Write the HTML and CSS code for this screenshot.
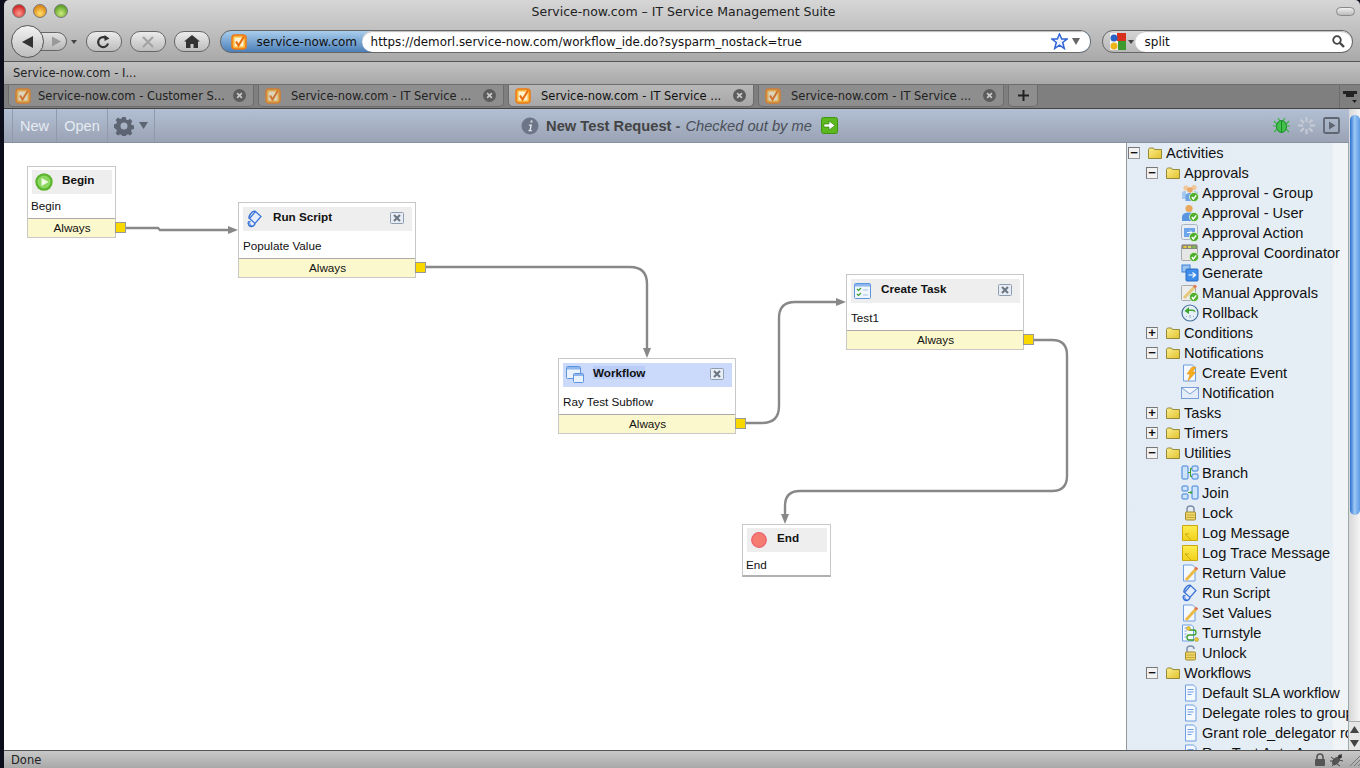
FILE: index.html
```html
<!DOCTYPE html>
<html lang="en">
<head>
    <meta charset="UTF-8">
    <title>Service-now.com - IT Service Management Suite</title>
    <link rel="stylesheet" href="styles.css">
</head>
<body>
<svg class="sprites" xmlns="http://www.w3.org/2000/svg">
    <defs>
        <linearGradient id="g-folder" x1="0" y1="0" x2="1" y2="1"><stop offset="0" stop-color="#fbee8c"/><stop offset="1" stop-color="#e2c22e"/></linearGradient>
        <linearGradient id="g-note" x1="0" y1="0" x2="0" y2="1"><stop offset="0" stop-color="#fdec50"/><stop offset="1" stop-color="#f2d21a"/></linearGradient>
    </defs>
    <symbol id="fav" viewBox="0 0 16 16">
        <rect x="1" y="1" width="14" height="14" rx="3" fill="#f9b53a" stroke="#ee7a12" stroke-width="1.5"/>
        <rect x="3.5" y="3.5" width="9" height="9" fill="#fff3cf"/>
        <path d="M5 7.5l2.5 4L13 2.5" fill="none" stroke="#e86a0a" stroke-width="2"/>
    </symbol>
    <symbol id="folder" viewBox="0 0 14 12">
        <path d="M.5 11.5V2.5l1-1.5h4l1 1.5h7v9z" fill="url(#g-folder)" stroke="#94883a"/>
    </symbol>
    <symbol id="ok" viewBox="0 0 10 10">
        <circle cx="5" cy="5" r="4.6" fill="#4fae2c" stroke="#e8f6dc" stroke-width=".8"/>
        <path d="M2.8 5l1.6 2 2.8-3.6" fill="none" stroke="#fff" stroke-width="1.4"/>
    </symbol>
    <symbol id="group" viewBox="0 0 18 18">
        <circle cx="5" cy="4" r="2.6" fill="#efc79a"/><circle cx="13" cy="3.6" r="2.6" fill="#efc79a"/><circle cx="9" cy="6" r="2.8" fill="#e8a868"/>
        <path d="M1 15V9q0-2 4-2v8zM13 7q4 0 4 2v4h-4z" fill="#a6c8ee"/><path d="M4.500 17v-5q0-3 4.500-3t4 3v5z" fill="#6ea2e2"/>
        <use href="#ok" x="8" y="8" width="10" height="10"/>
    </symbol>
    <symbol id="user" viewBox="0 0 18 18">
        <circle cx="8" cy="4.500" r="3.600" fill="#e9a85c"/>
        <path d="M1 17v-4q0-4.500 7-4.500t7 4.500v4z" fill="#5a96e0"/>
        <use href="#ok" x="8" y="8" width="10" height="10"/>
    </symbol>
    <symbol id="action" viewBox="0 0 18 18">
        <rect x=".5" y=".5" width="16" height="15" rx="2" fill="#e8edf4" stroke="#aab4c4"/>
        <rect x="3" y="4" width="11" height="9" fill="#6ea4ea"/>
        <path d="M6 8.500h5M9 6.500l2 2-2 2" stroke="#fff" fill="none"/>
        <use href="#ok" x="8" y="8" width="10" height="10"/>
    </symbol>
    <symbol id="coord" viewBox="0 0 18 18">
        <rect x=".5" y=".5" width="16" height="16" rx="1.500" fill="#e6e6e6" stroke="#aaa"/>
        <rect x="1" y="1" width="15" height="4" fill="#8a8a7c"/>
        <rect x="2.500" y="2" width="3" height="2" fill="#e8c83a"/><rect x="7" y="2" width="3" height="2" fill="#d8d860"/><rect x="11.500" y="2" width="3" height="2" fill="#7cc04a"/>
        <use href="#ok" x="8" y="8" width="10" height="10"/>
    </symbol>
    <symbol id="generate" viewBox="0 0 18 18">
        <rect x="1" y="1" width="8" height="7" fill="#9cc4f2" stroke="#3a80d8"/>
        <rect x="5" y="5" width="12" height="12" rx="1" fill="#3f8de8" stroke="#2a6cc4"/>
        <path d="M7.500 11h7M11.500 8.500l3 2.500-3 2.500" stroke="#fff" fill="none" stroke-width="1.200"/>
    </symbol>
    <symbol id="manual" viewBox="0 0 18 18">
        <rect x=".5" y="1.500" width="14" height="15" rx="1" fill="#ececec" stroke="#aaa"/>
        <path d="M3 14L14 2.500" stroke="#e6c878" stroke-width="3"/><path d="M13 3.500l2-2" stroke="#e07a5a" stroke-width="3"/>
        <use href="#ok" x="8" y="8" width="10" height="10"/>
    </symbol>
    <symbol id="rollback" viewBox="0 0 18 18">
        <circle cx="9" cy="9" r="8" fill="#e6eef8" stroke="#48709e" stroke-width="1.200"/>
        <path d="M3.500 7L8 3v2.500h3.500q3 0 3 3-1-1.500-3-1.500H8v3z" fill="#3ca52c"/>
        <path d="M9 11v3M5 12l1 1M13 12l-1 1" stroke="#8fa8c4"/>
    </symbol>
    <symbol id="event" viewBox="0 0 18 18">
        <path d="M2.500 1h9l3 3v13h-12z" fill="#f4f8ff" stroke="#6f9fe0"/>
        <path d="M11 3L6 10h3l-2 7 8-9h-3.500L15 3z" fill="#f6ae1c" stroke="#d88a10" stroke-width=".5"/>
    </symbol>
    <symbol id="mail" viewBox="0 0 18 18">
        <rect x=".5" y="3.500" width="17" height="11" fill="#e4ecf8" stroke="#7a9fd8"/>
        <path d="M1 4l8 6 8-6" fill="#f4f7fc" stroke="#7a9fd8"/>
    </symbol>
    <symbol id="branch" viewBox="0 0 18 18">
        <rect x="1" y="2" width="6" height="13" rx="1" fill="#cfe4fa" stroke="#3a80d8"/>
        <rect x="11" y="2" width="6" height="5" rx="1" fill="#cfe4fa" stroke="#3a80d8"/>
        <rect x="11" y="10" width="6" height="5" rx="1" fill="#cfe4fa" stroke="#3a80d8"/>
        <path d="M7 8.500h2.500M9.500 4.500v8M9.500 4.500H11M9.500 12.500H11" stroke="#3aa02c" fill="none"/>
    </symbol>
    <symbol id="join" viewBox="0 0 18 18">
        <rect x="1" y="2" width="6" height="5" rx="1" fill="#cfe4fa" stroke="#3a80d8"/>
        <rect x="1" y="10" width="6" height="5" rx="1" fill="#cfe4fa" stroke="#3a80d8"/>
        <rect x="11" y="2" width="6" height="13" rx="1" fill="#cfe4fa" stroke="#3a80d8"/>
        <path d="M7 8.500h4M9.500 7l1.500 1.500L9.500 10" stroke="#3aa02c" fill="none"/>
    </symbol>
    <symbol id="lock" viewBox="0 0 18 18">
        <path d="M6 8V5q0-3 3.500-3T13 5v3" fill="none" stroke="#7c8ea8" stroke-width="1.500"/>
        <rect x="4.500" y="8" width="10" height="8" rx="1" fill="#f0d668" stroke="#a08c30"/>
        <path d="M5.500 11h8M5.500 13.500h8" stroke="#c4a83c"/>
    </symbol>
    <symbol id="unlock" viewBox="0 0 18 18">
        <path d="M6 8V5q0-3 3.500-3T13 5" fill="none" stroke="#7c8ea8" stroke-width="1.500"/>
        <rect x="4.500" y="8" width="10" height="8" rx="1" fill="#f0d668" stroke="#a08c30"/>
        <path d="M5.500 11h8M5.500 13.500h8" stroke="#c4a83c"/>
    </symbol>
    <symbol id="note" viewBox="0 0 18 18">
        <path d="M1.500 1.500h15v15h-15z" fill="url(#g-note)" stroke="#c8a810"/>
        <path d="M4 10l6 6M4 10h4" stroke="#b89810" fill="none" stroke-width=".7"/>
    </symbol>
    <symbol id="pencil" viewBox="0 0 18 18">
        <path d="M2.500 1h9l2.500 2.500V17h-11.500z" fill="#f4f8ff" stroke="#6f9fe0"/>
        <path d="M5 16L15 5" stroke="#eabb4a" stroke-width="3"/><path d="M14.500 5.500L16 3.500" stroke="#e0705a" stroke-width="3"/>
    </symbol>
    <symbol id="script" viewBox="0 0 18 18">
        <path d="M9.500 1.500l5.500 5-6 7-5.500-5z" fill="#e4eefc" stroke="#3670d8" stroke-width="1.200"/>
        <path d="M9.500 1.500Q7 .5 4.500 4T3.500 8.500M9 13.500q-1 3-3.500 3T2.500 14t2-2.500" fill="none" stroke="#3670d8" stroke-width="1.400"/>
        <path d="M3 11q-1.500 1.500-.5 3.500T6 16" fill="#7fa8ec" stroke="#3670d8"/>
    </symbol>
    <symbol id="turn" viewBox="0 0 18 18">
        <path d="M1.500 1h9l2 2v14h-11z" fill="#f4f8ff" stroke="#6f9fe0"/>
        <path d="M3.500 4h3M3.500 7h2M3.500 10h2M3.500 13h2" stroke="#7a9fd8"/>
        <path d="M8 6h5q2 0 2 2.500T13 11H8q-2 0-2 2.500T8 16h5" fill="none" stroke="#3aa02c" stroke-width="1.300"/>
        <circle cx="7.500" cy="4.500" r="2" fill="#e8c83a" stroke="#a08c30" stroke-width=".5"/><circle cx="15.500" cy="15.500" r="2" fill="#e8c83a" stroke="#a08c30" stroke-width=".5"/>
    </symbol>
    <symbol id="doc" viewBox="0 0 18 18">
        <path d="M4.500 1h8l2.500 2.500V17H4.500z" fill="#f4f8ff" stroke="#6f9fe0"/>
        <path d="M6.500 5.500h6M6.500 8h6M6.500 10.500h4" stroke="#6f9fe0"/>
    </symbol>
    <symbol id="task" viewBox="0 0 18 18">
        <rect x=".5" y="1.500" width="16" height="15" rx="1" fill="#f0f6fe" stroke="#5c94de"/>
        <rect x="1" y="2" width="15" height="2.500" fill="#8cb6ec"/>
        <path d="M3 7l1.500 1.500L7 6M3 12l1.500 1.500L7 11" stroke="#3aa02c" fill="none" stroke-width="1.200"/>
        <path d="M9 8h5M9 13h5" stroke="#a8c4e8"/>
    </symbol>
    <symbol id="flow" viewBox="0 0 18 18">
        <rect x=".5" y=".5" width="14" height="12" rx="1" fill="#eaf2fd" stroke="#5c94de"/>
        <rect x="1" y="1" width="13" height="2.500" fill="#8cb6ec"/>
        <rect x="7.500" y="7.500" width="10" height="9" rx="1" fill="#eaf2fd" stroke="#5c94de"/>
        <rect x="8" y="8" width="9" height="2" fill="#8cb6ec"/>
    </symbol>
    <symbol id="x-box" viewBox="0 0 14 12">
        <rect x=".5" y=".5" width="13" height="11" rx="1" fill="#e8ecf4" stroke="#8f9db0"/>
        <path d="M4 3l6 6M10 3l-6 6" stroke="#6a7482" stroke-width="2"/>
    </symbol>
    <symbol id="tab-x" viewBox="0 0 12 12">
        <circle cx="6" cy="6" r="6" fill="#5c5c5c"/>
        <path d="M3.800 3.800l4.400 4.400M8.200 3.800l-4.400 4.400" stroke="#c8c8c8" stroke-width="1.600"/>
    </symbol>
</svg>

<div class="screen">
    <div class="edge"></div>
    <div class="window">
        <div class="titlebar">
            <div class="lights">
                <span class="light light-red"></span>
                <span class="light light-amber"></span>
                <span class="light light-green"></span>
            </div>
            <div class="window-title">Service-now.com – IT Service Management Suite</div>
            <span class="toolbar-pill"></span>
        </div>

        <div class="navbar">
            <div class="back-forward">
                <div class="back-btn">
                    <svg width="14" height="14" viewBox="0 0 14 14"><path d="M1 7l11-6v12z" fill="#333"/></svg>
                </div>
                <div class="forward-btn">
                    <svg width="10" height="11" viewBox="0 0 10 11"><path d="M10 5.500L1 .5v10z" fill="#9a9a9a"/></svg>
                </div>
                <span class="mini-arrow"></span>
            </div>
            <div class="nav-btn">
                <svg width="16" height="14" viewBox="0 0 16 14"><path d="M12 8.500A5 5 0 1 1 10 3" fill="none" stroke="#333" stroke-width="2.200"/><path d="M8.500 0l5 3.500-5 2.500z" fill="#333"/></svg>
            </div>
            <div class="nav-btn">
                <svg width="12" height="12" viewBox="0 0 12 12"><path d="M1 1l10 10M11 1L1 11" stroke="#a4a4a4" stroke-width="2.200"/></svg>
            </div>
            <div class="nav-btn">
                <svg width="16" height="13" viewBox="0 0 16 13"><path d="M8 0l8 6.500h-2V13H9.500V9h-3v4H2V6.500H0z" fill="#333"/></svg>
            </div>
            <div class="urlbar">
                <div class="identity">
                    <svg class="fav"><use href="#fav"/></svg>
                    <span>service-now.com</span>
                </div>
                <div class="url-input">
                    <span class="url-text">https://demorl.service-now.com/workflow_ide.do?sysparm_nostack=true</span>
                    <svg width="17" height="17" viewBox="0 0 17 17"><path d="M8.500 1l2.200 5h5.300l-4.300 3.500 1.600 6-4.800-3.300-4.800 3.300 1.600-6L1 6h5.300z" fill="#eef4fe" stroke="#2f63d8" stroke-width="1.500"/></svg>
                    <span class="url-arrow"></span>
                </div>
            </div>
            <div class="searchbar">
                <div class="engine">
                    <svg width="16" height="17" viewBox="0 0 16 17">
                        <rect width="16" height="17" rx="1" fill="#f4f4f4"/>
                        <rect x="7" y="0" width="9" height="8" fill="#d8301f"/>
                        <circle cx="4" cy="5" r="3.500" fill="#2a62c8"/>
                        <rect x="8" y="8" width="8" height="9" fill="#3f9a2e"/>
                        <circle cx="4" cy="13" r="3.500" fill="#efb417"/>
                    </svg>
                    <span class="mini-arrow"></span>
                </div>
                <div class="search-input">
                    <span class="search-text">split</span>
                    <svg width="13" height="13" viewBox="0 0 13 13"><circle cx="5" cy="5" r="3.800" fill="none" stroke="#444" stroke-width="1.800"/><path d="M8 8l4 4" stroke="#444" stroke-width="2.400"/></svg>
                </div>
            </div>
        </div>

        <div class="bookmarks">Service-now.com - I...</div>

        <div class="tabstrip">
            <div class="tab">
                <svg class="fav faded"><use href="#fav"/></svg>
                <span class="tab-label">Service-now.com - Customer S...</span>
                <svg class="tab-close"><use href="#tab-x"/></svg>
            </div>
            <div class="tab">
                <svg class="fav faded"><use href="#fav"/></svg>
                <span class="tab-label tab-label-pad">Service-now.com - IT Service ...</span>
                <svg class="tab-close"><use href="#tab-x"/></svg>
            </div>
            <div class="tab tab-active">
                <svg class="fav"><use href="#fav"/></svg>
                <span class="tab-label tab-label-pad">Service-now.com - IT Service ...</span>
                <svg class="tab-close"><use href="#tab-x"/></svg>
            </div>
            <div class="tab">
                <svg class="fav faded"><use href="#fav"/></svg>
                <span class="tab-label tab-label-pad">Service-now.com - IT Service ...</span>
                <svg class="tab-close"><use href="#tab-x"/></svg>
            </div>
            <div class="tab-new">
                <svg width="11" height="11" viewBox="0 0 11 11"><path d="M5.500 0v11M0 5.500h11" stroke="#222" stroke-width="2"/></svg>
            </div>
            <div class="tab-list">
                <svg width="14" height="14" viewBox="0 0 14 14"><path d="M0 1h14v3H11v3H3V4H0z" fill="#222"/><path d="M9 10h5l-2.500 3z" fill="#222"/></svg>
            </div>
        </div>

        <div class="workspace">
            <div class="app">
                <div class="app-toolbar">
                    <div class="app-buttons">
                        <span class="app-btn app-btn-new">New</span>
                        <span class="app-btn app-btn-open">Open</span>
                        <span class="app-btn app-btn-gear">
                            <svg width="20" height="20" viewBox="0 0 20 20"><path d="M8.300 1h3.400l.5 2.500 1.700.7 2.100-1.400 2.400 2.400-1.400 2.100.7 1.700 2.300.5v3.400l-2.300.5-.7 1.700 1.400 2.100-2.400 2.400-2.100-1.400-1.700.7-.5 2.100H8.300l-.5-2.100-1.700-.7-2.100 1.400-2.400-2.400 1.400-2.100-.7-1.700L0 11.700V8.300l2.300-.5.7-1.700L1.600 4l2.400-2.400 2.100 1.400 1.700-.7zM10 6.500a3.500 3.500 0 1 0 0 7 3.500 3.500 0 0 0 0-7z" fill="#5d6572" fill-rule="evenodd"/></svg>
                            <svg width="9" height="7" viewBox="0 0 9 7"><path d="M0 0h9L4.500 7z" fill="#5d6572"/></svg>
                        </span>
                    </div>
                    <div class="app-title">
                        <svg width="18" height="18" viewBox="0 0 18 18"><circle cx="9" cy="9" r="8.500" fill="#6d7589"/><path d="M9.800 3.500h1.800l-.4 1.900H9.400zM8 7.500h3L9.800 13h1.200l-.2 1.200H7.400l.2-1.200h.8L9.300 8.700H7.800z" fill="#dfe3ea"/></svg>
                        <span class="app-name">New Test Request</span>
                        <span class="app-dash">-</span>
                        <span class="app-state">Checked out by me</span>
                        <svg width="17" height="17" viewBox="0 0 17 17"><rect x=".5" y=".5" width="16" height="16" rx="2" fill="#5cb81e" stroke="#3f9412"/><path d="M3 7h5V4l6 4.500-6 4.500v-3H3z" fill="#fff" stroke="#2e7a0c" stroke-width=".6"/></svg>
                    </div>
                    <div class="app-tools">
                        <svg width="17" height="17" viewBox="0 0 17 17"><path d="M1 4l3 3M16 4l-3 3M0 9h3M17 9h-3M1 15l3-3M16 15l-3-3M5 1l2 3M12 1l-2 3" stroke="#35b93a" stroke-width="1.200"/><ellipse cx="8.500" cy="9.500" rx="5" ry="6" fill="#42c04a" stroke="#188a28"/><path d="M8.500 4v11" stroke="#188a28"/></svg>
                        <svg width="17" height="17" viewBox="0 0 17 17"><path d="M8.500 0v5M8.500 12v5M0 8.500h5M12 8.500h5M2.500 2.500L6 6M11 11l3.500 3.500M14.500 2.500L11 6M6 11l-3.500 3.500" stroke="#c6cbd4" stroke-width="2"/></svg>
                        <svg width="17" height="17" viewBox="0 0 17 17"><rect x="1" y="1" width="15" height="15" rx="1.500" fill="none" stroke="#5f6672" stroke-width="1.800"/><path d="M6 4.500l6.500 4-6.500 4z" fill="#5f6672"/></svg>
                    </div>
                </div>

                <div class="app-body">
                    <div class="canvas">
                        <svg class="connectors" viewBox="0 0 1122 607">
                            <g fill="none" stroke="#888" stroke-width="2.400">
                                <path d="M122 85H154L156 87H224"/>
                                <path d="M422 124H626Q643 124 643 141V205"/>
                                <path d="M742 280H758Q775 280 775 263V175Q775 159 791 159H832"/>
                                <path d="M1030 197H1048Q1063 197 1063 212V333Q1063 348 1048 348H796Q781 348 781 363V371"/>
                            </g>
                            <g fill="#888">
                                <path d="M224 83L234 87L224 91z"/>
                                <path d="M639 205H647L643 215z"/>
                                <path d="M832 155L842 159L832 163z"/>
                                <path d="M777 371H785L781 381z"/>
                            </g>
                        </svg>

                        <div class="node node-begin">
                            <div class="node-head">
                                <svg class="node-icon" viewBox="0 0 18 18"><circle cx="9" cy="9" r="8.700" fill="#5cb52e"/><circle cx="9" cy="9" r="6.500" fill="#8cd860"/><path d="M6.500 5l7 4-7 4z" fill="#f2fae8"/></svg>
                                <span class="node-title">Begin</span>
                            </div>
                            <div class="node-body">Begin</div>
                            <div class="node-foot">Always<span class="handle"></span></div>
                        </div>

                        <div class="node node-script">
                            <div class="node-head">
                                <svg class="node-icon"><use href="#script"/></svg>
                                <span class="node-title">Run Script</span>
                                <svg class="node-close"><use href="#x-box"/></svg>
                            </div>
                            <div class="node-body">Populate Value</div>
                            <div class="node-foot">Always<span class="handle"></span></div>
                        </div>

                        <div class="node node-flow">
                            <div class="node-head node-head-selected">
                                <svg class="node-icon"><use href="#flow"/></svg>
                                <span class="node-title node-title-selected">Workflow</span>
                                <svg class="node-close"><use href="#x-box"/></svg>
                            </div>
                            <div class="node-body">Ray Test Subflow</div>
                            <div class="node-foot">Always<span class="handle"></span></div>
                        </div>

                        <div class="node node-task">
                            <div class="node-head">
                                <svg class="node-icon"><use href="#task"/></svg>
                                <span class="node-title">Create Task</span>
                                <svg class="node-close"><use href="#x-box"/></svg>
                            </div>
                            <div class="node-body">Test1</div>
                            <div class="node-foot">Always<span class="handle"></span></div>
                        </div>

                        <div class="node node-end">
                            <div class="node-head">
                                <svg class="node-icon node-icon-end" viewBox="0 0 18 18"><circle cx="9" cy="9" r="8.200" fill="#f47c70" stroke="#ee5f6e" stroke-width="1.400"/></svg>
                                <span class="node-title">End</span>
                            </div>
                            <div class="node-body node-body-end">End</div>
                        </div>
                    </div>

                    <div class="tree">
                        <div class="row l0"><span class="toggle">−</span><svg class="folder"><use href="#folder"/></svg>Activities</div>
                        <div class="row l1"><span class="toggle">−</span><svg class="folder"><use href="#folder"/></svg>Approvals</div>
                        <div class="row leaf"><svg class="leaf-icon"><use href="#group"/></svg>Approval - Group</div>
                        <div class="row leaf"><svg class="leaf-icon"><use href="#user"/></svg>Approval - User</div>
                        <div class="row leaf"><svg class="leaf-icon"><use href="#action"/></svg>Approval Action</div>
                        <div class="row leaf"><svg class="leaf-icon"><use href="#coord"/></svg>Approval Coordinator</div>
                        <div class="row leaf"><svg class="leaf-icon"><use href="#generate"/></svg>Generate</div>
                        <div class="row leaf"><svg class="leaf-icon"><use href="#manual"/></svg>Manual Approvals</div>
                        <div class="row leaf"><svg class="leaf-icon"><use href="#rollback"/></svg>Rollback</div>
                        <div class="row l1"><span class="toggle">+</span><svg class="folder"><use href="#folder"/></svg>Conditions</div>
                        <div class="row l1"><span class="toggle">−</span><svg class="folder"><use href="#folder"/></svg>Notifications</div>
                        <div class="row leaf"><svg class="leaf-icon"><use href="#event"/></svg>Create Event</div>
                        <div class="row leaf"><svg class="leaf-icon"><use href="#mail"/></svg>Notification</div>
                        <div class="row l1"><span class="toggle">+</span><svg class="folder"><use href="#folder"/></svg>Tasks</div>
                        <div class="row l1"><span class="toggle">+</span><svg class="folder"><use href="#folder"/></svg>Timers</div>
                        <div class="row l1"><span class="toggle">−</span><svg class="folder"><use href="#folder"/></svg>Utilities</div>
                        <div class="row leaf"><svg class="leaf-icon"><use href="#branch"/></svg>Branch</div>
                        <div class="row leaf"><svg class="leaf-icon"><use href="#join"/></svg>Join</div>
                        <div class="row leaf"><svg class="leaf-icon"><use href="#lock"/></svg>Lock</div>
                        <div class="row leaf"><svg class="leaf-icon"><use href="#note"/></svg>Log Message</div>
                        <div class="row leaf"><svg class="leaf-icon"><use href="#note"/></svg>Log Trace Message</div>
                        <div class="row leaf"><svg class="leaf-icon"><use href="#pencil"/></svg>Return Value</div>
                        <div class="row leaf"><svg class="leaf-icon"><use href="#script"/></svg>Run Script</div>
                        <div class="row leaf"><svg class="leaf-icon"><use href="#pencil"/></svg>Set Values</div>
                        <div class="row leaf"><svg class="leaf-icon"><use href="#turn"/></svg>Turnstyle</div>
                        <div class="row leaf"><svg class="leaf-icon"><use href="#unlock"/></svg>Unlock</div>
                        <div class="row l1"><span class="toggle">−</span><svg class="folder"><use href="#folder"/></svg>Workflows</div>
                        <div class="row leaf"><svg class="leaf-icon"><use href="#doc"/></svg>Default SLA workflow</div>
                        <div class="row leaf"><svg class="leaf-icon"><use href="#doc"/></svg>Delegate roles to group</div>
                        <div class="row leaf"><svg class="leaf-icon"><use href="#doc"/></svg>Grant role_delegator role</div>
                        <div class="row leaf"><svg class="leaf-icon"><use href="#doc"/></svg>Ray Test Auto Approve</div>
                    </div>
                </div>
            </div>

            <div class="scrollbar">
                <div class="scroll-thumb"></div>
                <div class="scroll-arrows">
                    <svg width="9" height="7" viewBox="0 0 9 7"><path d="M4.500 0L9 7H0z" fill="#444"/></svg>
                    <svg width="9" height="7" viewBox="0 0 9 7"><path d="M4.500 7L9 0H0z" fill="#444"/></svg>
                </div>
            </div>
        </div>

        <div class="statusbar">
            <span>Done</span>
            <div class="status-icons">
                <svg width="12" height="14" viewBox="0 0 12 14"><path d="M3 6V4q0-3 3-3t3 3v2" fill="none" stroke="#555" stroke-width="1.600"/><rect x="1" y="6" width="10" height="7" rx="1" fill="#555"/></svg>
                <svg width="16" height="14" viewBox="0 0 16 14"><ellipse cx="7" cy="8" rx="3" ry="5" transform="rotate(40 7 8)" fill="#555"/><circle cx="11" cy="3.500" r="2" fill="#333"/><path d="M2 4l4 3M1 8h4M3 13l3-3M10 7l4 1M8 11l3 2M13 1l-2 2" stroke="#444"/></svg>
                <svg width="12" height="12" viewBox="0 0 12 12"><path d="M2 12L12 2M6 12l6-6M10 12l2-2" stroke="#777"/></svg>
            </div>
        </div>
    </div>
</div>
</body>
</html>
```

FILE: styles.css
```css
html, body {
    margin: 0;
    padding: 0;
    height: 100%;
    overflow: hidden;
}

body {
    background: #0c0e1c;
    font-family: "Liberation Sans", Arial, sans-serif;
    color: #111;
}

.sprites {
    position: absolute;
    width: 0;
    height: 0;
}

.screen {
    display: flex;
    height: 768px;
}

.edge {
    width: 4px;
    background: #0c0e1c;
}

.window {
    flex: 1;
    display: flex;
    flex-direction: column;
    min-width: 0;
    font-family: "DejaVu Sans", sans-serif;
    font-size: 11px;
}

/* browser chrome */
.titlebar {
    height: 22px;
    display: grid;
    grid-template-columns: 1fr auto 1fr;
    align-items: center;
    padding: 0 5px 0 8px;
    background: linear-gradient(#d6d6d6, #c6c6c6);
    border-top-left-radius: 5px;
    border-top-right-radius: 5px;
}

.lights {
    display: flex;
    gap: 7px;
}

.light {
    width: 14px;
    height: 14px;
    border-radius: 50%;
    border: 1px solid #777;
    box-sizing: border-box;
}

.light-red {
    background: radial-gradient(circle at 50% 70%, #ff9c90, #d42a2a 70%);
}

.light-amber {
    background: radial-gradient(circle at 50% 70%, #ffe26a, #de8a1a 70%);
}

.light-green {
    background: radial-gradient(circle at 50% 70%, #cdec80, #62a52a 70%);
}

.window-title {
    font-size: 12.5px;
    color: #222;
}

.toolbar-pill {
    width: 19px;
    height: 9px;
    justify-self: end;
    border: 1px solid #888;
    border-radius: 5px;
    background: linear-gradient(#eee, #bbb);
    box-sizing: border-box;
}

.navbar {
    height: 39px;
    display: flex;
    align-items: center;
    padding: 0 7px 0 7px;
    background: linear-gradient(#c6c6c6, #a9a9a9);
    border-bottom: 1px solid #555;
}

.back-forward {
    display: flex;
    align-items: center;
    width: 75px;
    position: relative;
}

.back-btn {
    width: 31px;
    height: 31px;
    border-radius: 50%;
    border: 1px solid #555;
    background: linear-gradient(#f2f2f2, #bdbdbd);
    display: flex;
    align-items: center;
    justify-content: center;
    position: relative;
    z-index: 1;
}

.forward-btn {
    width: 31px;
    height: 19px;
    margin-left: -8px;
    padding-left: 8px;
    box-sizing: border-box;
    border: 1px solid #666;
    border-radius: 0 10px 10px 0;
    background: linear-gradient(#e2e2e2, #b8b8b8);
    display: flex;
    align-items: center;
    justify-content: center;
}

.mini-arrow {
    width: 0;
    height: 0;
    margin-left: 4px;
    border-left: 3px solid transparent;
    border-right: 3px solid transparent;
    border-top: 4px solid #444;
}

.nav-btn {
    width: 34px;
    height: 19px;
    margin-right: 8px;
    border: 1px solid #666;
    border-radius: 10px;
    background: linear-gradient(#ececec, #bcbcbc);
    display: flex;
    align-items: center;
    justify-content: center;
}

.urlbar {
    width: 871px;
    height: 21px;
    margin: 0 11px 0 2px;
    display: flex;
    border: 1px solid #666;
    border-radius: 11px;
    background: linear-gradient(#a9cdec, #4c7fb8);
    overflow: hidden;
}

.identity {
    width: 141px;
    display: flex;
    align-items: center;
    gap: 10px;
    padding-left: 10px;
    box-sizing: border-box;
    color: #111;
    font-size: 12px;
    white-space: nowrap;
}

.fav {
    width: 16px;
    height: 16px;
    flex: none;
}

.faded {
    opacity: 0.7;
}

.url-input {
    flex: 1;
    display: flex;
    align-items: center;
    padding: 0 10px 0 9px;
    background: #fff;
    border-radius: 11px 0 0 11px;
    box-shadow: inset 0 1px 1px #bbb;
}

.url-text {
    flex: 1;
    font-size: 11.9px;
    color: #111;
}

.url-arrow {
    width: 0;
    height: 0;
    margin-left: 4px;
    border-left: 4px solid transparent;
    border-right: 4px solid transparent;
    border-top: 7px solid #666;
}

.searchbar {
    width: 250px;
    height: 21px;
    display: flex;
    border: 1px solid #666;
    border-radius: 11px;
    background: linear-gradient(#d4d4d4, #b8b8b8);
    overflow: hidden;
}

.engine {
    width: 32px;
    display: flex;
    align-items: center;
    padding-left: 7px;
    box-sizing: border-box;
}

.engine .mini-arrow {
    margin-left: 2px;
}

.search-input {
    flex: 1;
    display: flex;
    align-items: center;
    padding: 0 7px 0 10px;
    background: #fff;
    border-radius: 11px;
    box-shadow: inset 0 1px 1px #bbb;
}

.search-text {
    flex: 1;
    font-size: 12px;
}

.bookmarks {
    height: 22px;
    line-height: 22px;
    padding-left: 9px;
    background: linear-gradient(#c2c2c2, #a8a8a8);
    color: #222;
    font-size: 11.5px;
}

.tabstrip {
    height: 25px;
    display: flex;
    gap: 4px;
    padding-left: 4px;
    background: #7f7f7f;
    border-top: 1px solid #6e6e6e;
    border-bottom: 1px solid #444;
    box-sizing: border-box;
}

.tab {
    width: 246px;
    height: 22px;
    display: flex;
    align-items: center;
    padding: 0 7px 0 6px;
    box-sizing: border-box;
    background: #8e8e8e;
    border: 1px solid #6c6c6c;
    border-top: 0;
    border-radius: 0 0 5px 5px;
    color: #222;
}

.tab-active {
    background: linear-gradient(#b8b8b8, #a8a8a8);
    color: #111;
}

.tab-label {
    flex: 1;
    margin-left: 7px;
    white-space: nowrap;
    overflow: hidden;
    font-size: 11.5px;
}

.tab-label-pad {
    margin-left: 10px;
}

.tab-close {
    width: 13px;
    height: 13px;
    flex: none;
}

.tab-new {
    width: 30px;
    height: 22px;
    display: flex;
    align-items: center;
    justify-content: center;
    background: #8e8e8e;
    border: 1px solid #6c6c6c;
    border-top: 0;
    border-radius: 0 0 5px 5px;
    box-sizing: border-box;
}

.tab-list {
    margin-left: auto;
    width: 20px;
    display: flex;
    align-items: center;
    justify-content: center;
    border-left: 1px solid #6c6c6c;
}

/* workflow editor */
.workspace {
    flex: 1;
    display: flex;
    min-height: 0;
}

.app {
    flex: 1;
    display: flex;
    flex-direction: column;
    min-width: 0;
    font-family: "Liberation Sans", Arial, sans-serif;
}

.app-toolbar {
    height: 34px;
    display: grid;
    grid-template-columns: 1fr auto 1fr;
    align-items: center;
    padding-left: 8px;
    background: linear-gradient(#b2bfd4, #9aa3b4);
    border-bottom: 1px solid #8a92a0;
    box-sizing: border-box;
}

.app-buttons {
    display: flex;
    height: 100%;
    border-left: 1px solid #8f9aad;
}

.app-btn {
    display: flex;
    align-items: center;
    justify-content: center;
    gap: 5px;
    box-sizing: border-box;
    font-size: 14.5px;
    color: #e6ebf2;
    border-right: 1px solid #8f9aad;
}

.app-btn-new {
    width: 44px;
}

.app-btn-open {
    width: 51px;
}

.app-btn-gear {
    width: 47px;
}

.app-title {
    display: flex;
    align-items: center;
    color: #4a4f58;
    font-size: 14.7px;
    white-space: nowrap;
    margin-right: 2px;
}

.app-name {
    margin-left: 7px;
    font-weight: bold;
    color: #444;
}

.app-dash {
    margin: 0 5px 0 4px;
    font-weight: bold;
}

.app-state {
    font-style: italic;
    margin-right: 9px;
}

.app-tools {
    display: flex;
    justify-content: flex-end;
    gap: 8px;
    padding-right: 9px;
}

.app-body {
    flex: 1;
    display: flex;
    min-height: 0;
}

.canvas {
    position: relative;
    flex: 1;
    background: #fff;
    font-size: 11.7px;
    overflow: hidden;
}

.connectors {
    position: absolute;
    left: 0;
    top: 0;
    width: 1122px;
    height: 607px;
}

.node {
    position: absolute;
    box-sizing: border-box;
    background: #fff;
    border: 1px solid #c8c8c8;
    color: #111;
}

.node-begin {
    left: 23px;
    top: 23px;
    width: 89px;
    height: 72px;
}

.node-script {
    left: 234px;
    top: 59px;
    width: 178px;
    height: 76px;
}

.node-flow {
    left: 554px;
    top: 215px;
    width: 178px;
    height: 76px;
}

.node-task {
    left: 842px;
    top: 131px;
    width: 178px;
    height: 76px;
}

.node-end {
    left: 738px;
    top: 381px;
    width: 89px;
    height: 53px;
    border-bottom: 2px solid #b0b0b0;
}

.node-head {
    height: 24px;
    margin: 3px 3px 0 4px;
    padding-left: 3px;
    display: flex;
    align-items: center;
    background: #eeeeee;
}

.node-script .node-head,
.node-flow .node-head,
.node-task .node-head {
    margin-top: 4px;
}

.node-head-selected {
    background: #cbdafb;
}

.node-icon {
    width: 18px;
    height: 18px;
    flex: none;
    margin-right: 9px;
}

.node-title {
    flex: 1;
    font-weight: bold;
    position: relative;
    top: -3px;
}

.node-title-selected {
    flex: none;
    background: #b9cdf8;
    margin-right: auto;
}

.node-close {
    width: 14px;
    height: 12px;
    flex: none;
    margin-right: 8px;
    position: relative;
    top: -1px;
}

.node-body {
    height: 24px;
    line-height: 24px;
    padding-left: 3px;
    white-space: nowrap;
}

.node-script .node-body,
.node-flow .node-body,
.node-task .node-body {
    height: 27px;
    line-height: 29px;
    padding-left: 4px;
}

.node-body-end {
    line-height: 26px;
}

.node-icon-end {
    width: 16px;
    height: 16px;
    margin: 0 10px 0 1px;
}

.node-foot {
    position: relative;
    height: 18px;
    line-height: 18px;
    padding-left: 1px;
    text-align: center;
    background: #fcf8cd;
    border-top: 1px solid #aaa;
}

.handle {
    position: absolute;
    right: -11px;
    top: 3px;
    width: 9px;
    height: 9px;
    background: #f8d800;
    border: 1px solid #999;
}

/* activities tree */
.tree {
    width: 223px;
    flex: none;
    box-sizing: border-box;
    border-left: 1px solid #999;
    border-right: 1px solid #9aa;
    background: linear-gradient(to right, #e3ecf5 0, #e6eef5 205px, #f1f4f7 207px);
    overflow: hidden;
    font-size: 14.6px;
    color: #111;
}

.row {
    height: 20px;
    display: flex;
    align-items: center;
    white-space: nowrap;
}

.l0 {
    padding-left: 1px;
}

.l1 {
    padding-left: 19px;
}

.leaf {
    padding-left: 54px;
}

.toggle {
    width: 12px;
    height: 12px;
    flex: none;
    box-sizing: border-box;
    margin-right: 8px;
    border: 1px solid #777;
    border-right-color: #999;
    border-bottom-color: #999;
    background: #f2f2f2;
    font-size: 13px;
    font-weight: bold;
    line-height: 9px;
    text-align: center;
    color: #111;
}

.folder {
    width: 14px;
    height: 12px;
    flex: none;
    margin-right: 4px;
}

.leaf-icon {
    width: 18px;
    height: 18px;
    flex: none;
    margin-right: 3px;
}

.scrollbar {
    width: 11px;
    flex: none;
    display: flex;
    flex-direction: column;
    background: linear-gradient(to right, #d8d8d8, #f4f4f4);
}

.scroll-thumb {
    height: 400px;
    margin: 6px 0 0 1px;
    border-radius: 6px;
    background: linear-gradient(to right, #2a6fd0, #9cc8f4 45%, #5c9ae6);
}

.scroll-arrows {
    margin-top: auto;
    height: 28px;
    display: flex;
    flex-direction: column;
    align-items: center;
    justify-content: space-around;
    background: #e6e6e6;
    border-top: 1px solid #aaa;
}

.statusbar {
    height: 18px;
    display: flex;
    align-items: center;
    justify-content: space-between;
    padding: 0 0 0 7px;
    border-top: 1px solid #555;
    box-sizing: border-box;
    background: linear-gradient(#c8c8c8, #a9a9a9);
    color: #222;
    font-size: 11.5px;
}

.status-icons {
    display: flex;
    align-items: center;
    gap: 3px;
}
```
